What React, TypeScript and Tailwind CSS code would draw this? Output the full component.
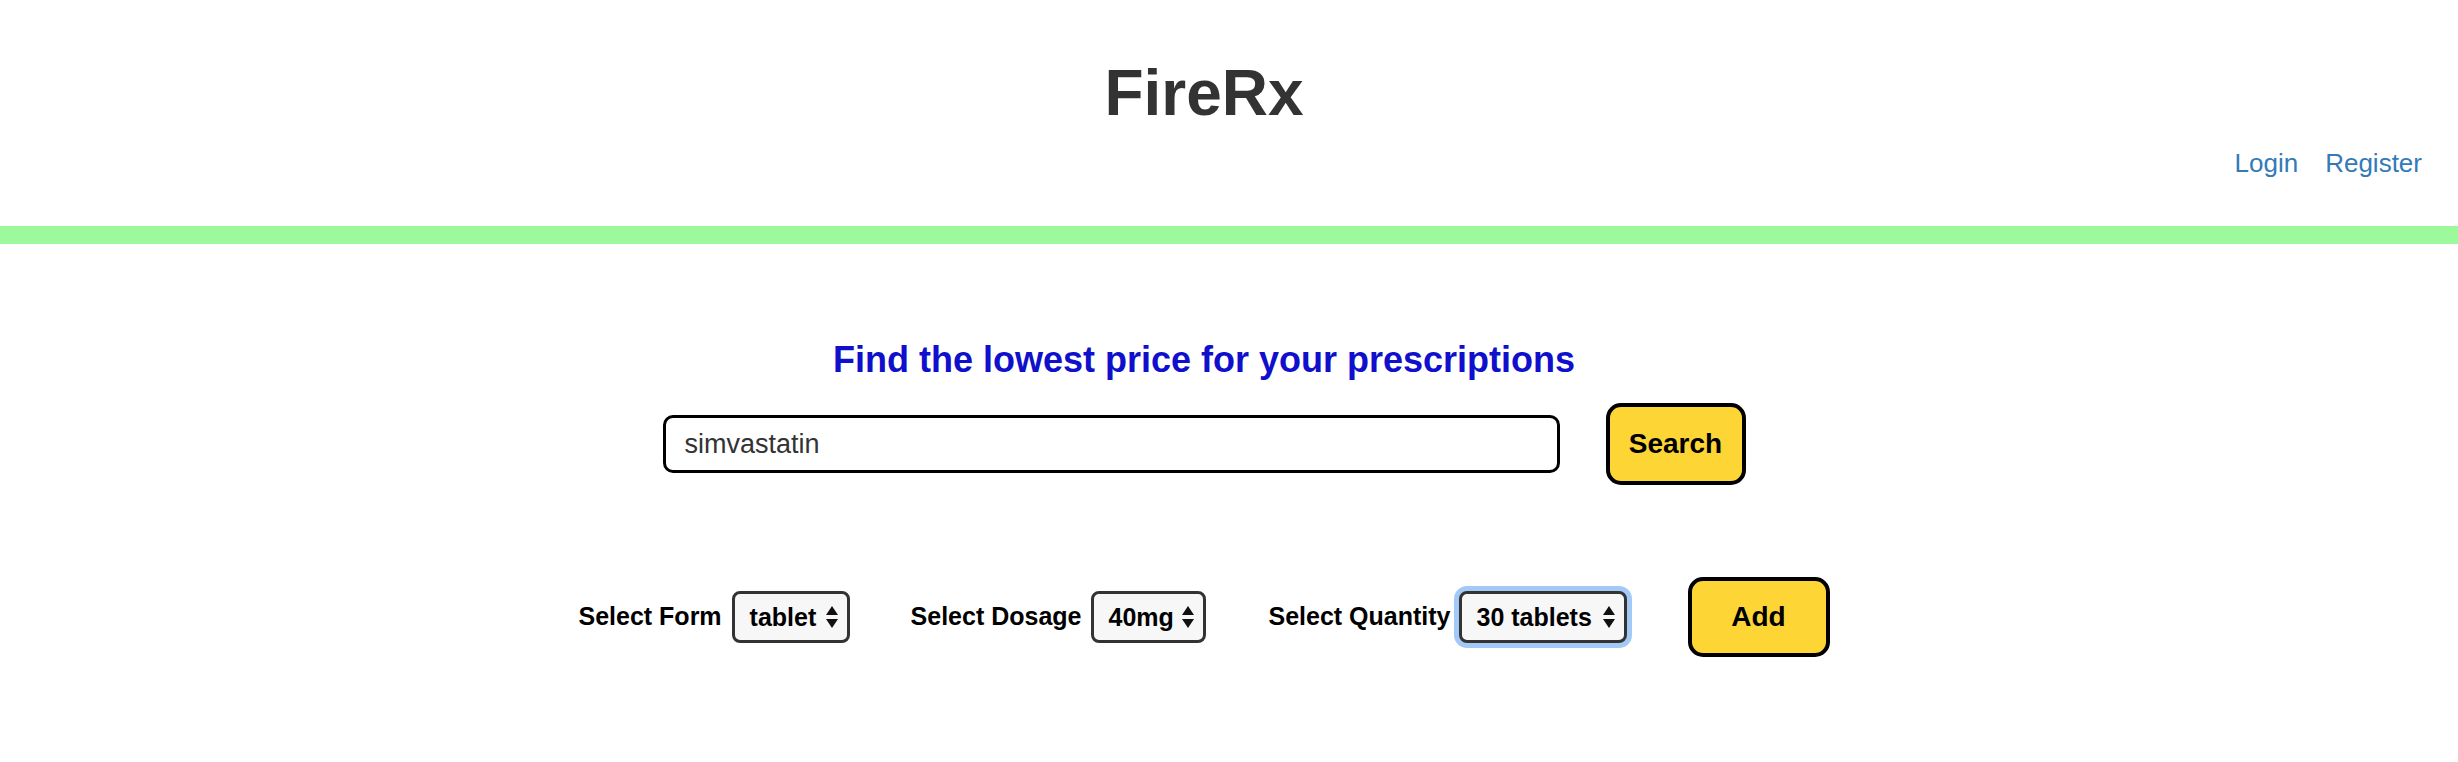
import React from "react";

const font = "font-['Liberation_Sans',Arial,sans-serif]";

function Arrows() {
  return (
    <svg width="12" height="22" viewBox="0 0 12 22" className="shrink-0">
      <path d="M6 0 L12 9 L0 9 Z" fill="#111" />
      <path d="M0 13 L12 13 L6 22 Z" fill="#111" />
    </svg>
  );
}

function FakeSelect({ value, width, focused }: { value: string; width: string; focused?: boolean }) {
  return (
    <div
      className={`${width} h-[52px] flex items-center justify-between pl-[15px] pr-[9px] border-[3px] border-[#333] rounded-[8px] bg-[#f7f7f7] ${
        focused ? "shadow-[0_0_0_5px_#a3c9f7]" : ""
      }`}
    >
      <span className="text-[25px] font-bold text-black leading-none">{value}</span>
      <Arrows />
    </div>
  );
}

export default function App() {
  return (
    <div className={`${font} w-[2458px] min-h-[762px] bg-white`}>
      <header className="pt-[61px]">
        <div className="w-[2408px]">
          <h1 className="text-center text-[64px] font-bold leading-none text-[#333]">FireRx</h1>
        </div>
        <nav className="mt-[25px] flex justify-end gap-[27px] pr-[36px] text-[26px] leading-none text-[#337ab7]">
          <a href="#">Login</a>
          <a href="#">Register</a>
        </nav>
        <div className="mt-[50px] h-[18px] bg-[#9cf99c]" />
      </header>

      <main className="w-[2408px] flex flex-col items-center">
        <h2 className="mt-[98px] text-[36px] font-bold leading-none text-[#0f0fcc]">
          Find the lowest price for your prescriptions
        </h2>

        <div className="mt-[25px] flex items-center gap-[46px]">
          <div className="w-[897px] h-[58px] flex items-center pl-[19px] border-[3px] border-black rounded-[10px] bg-white">
            <span className="text-[27px] text-[#333] leading-none">simvastatin</span>
          </div>
          <button className="w-[140px] h-[82px] border-[4px] border-black rounded-[15px] bg-[#fdd535] text-[28px] font-bold text-black">
            Search
          </button>
        </div>

        <div className="mt-[92px] flex items-center">
          <span className="text-[25px] font-bold text-black">Select Form</span>
          <div className="ml-[10px]">
            <FakeSelect value="tablet" width="w-[118px]" />
          </div>
          <span className="ml-[61px] text-[25px] font-bold text-black">Select Dosage</span>
          <div className="ml-[9px]">
            <FakeSelect value="40mg" width="w-[115px]" />
          </div>
          <span className="ml-[63px] text-[25px] font-bold text-black">Select Quantity</span>
          <div className="ml-[8px]">
            <FakeSelect value="30 tablets" width="w-[168px]" focused />
          </div>
          <button className="ml-[61px] w-[142px] h-[80px] border-[4px] border-black rounded-[15px] bg-[#fdd535] text-[28px] font-bold text-black">
            Add
          </button>
        </div>
      </main>
    </div>
  );
}
